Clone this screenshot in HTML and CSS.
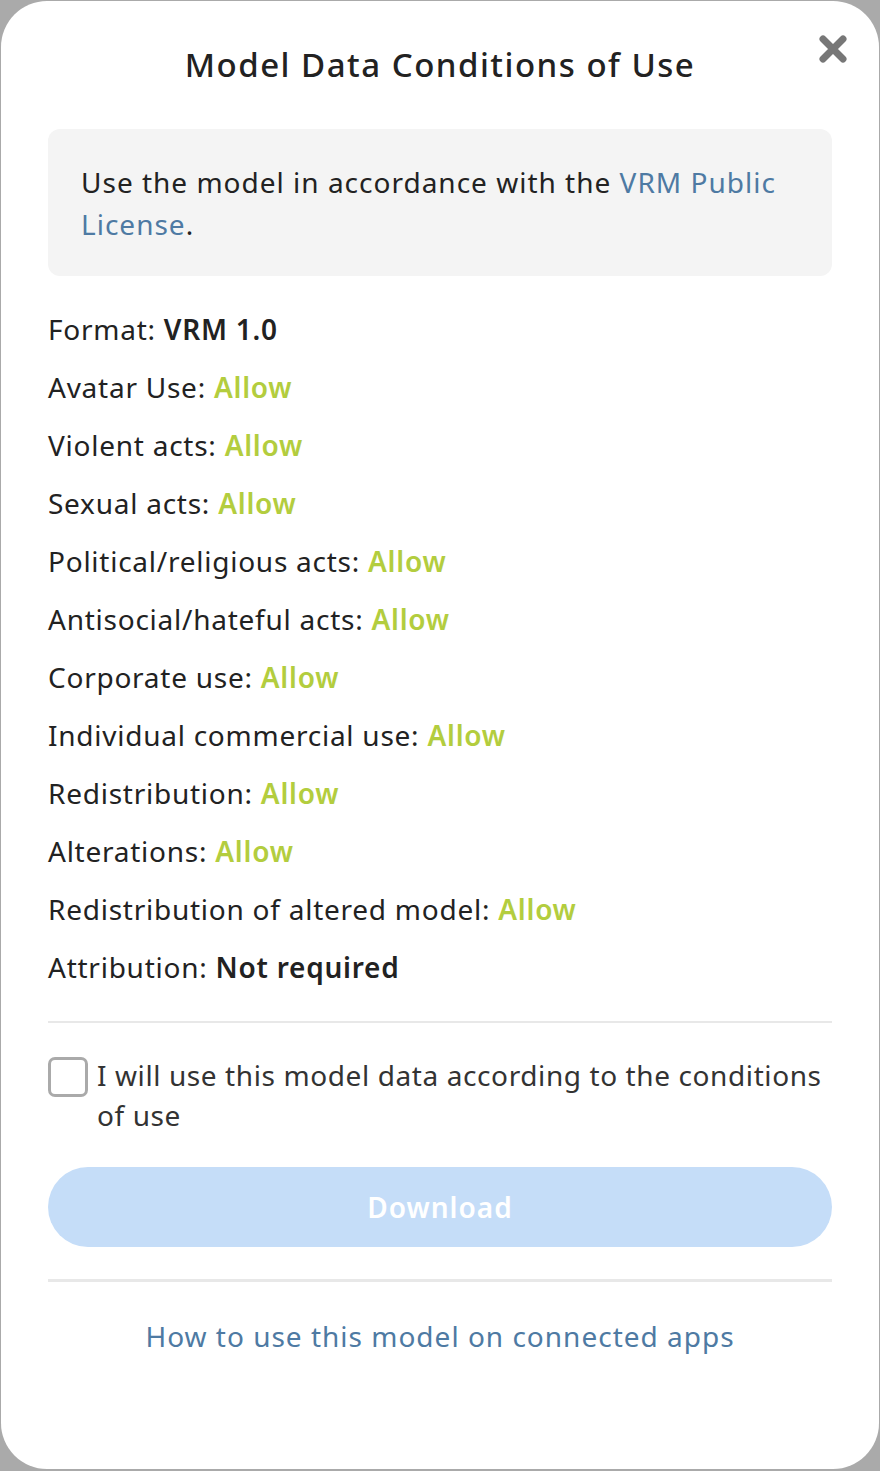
FILE: index.html
```html
<!DOCTYPE html>
<html lang="en">
<head>
  <meta charset="UTF-8">
  <meta name="viewport" content="width=device-width, initial-scale=1.0">
  <title>Model Data Conditions of Use</title>
  <link rel="stylesheet" href="styles.css">
</head>
<body>
    <div class="modal">
        <button class="close-button" aria-label="Close">
            <svg width="30" height="30" viewBox="0 0 30 30">
                <path d="M5 5 L25 25 M25 5 L5 25" stroke="#777777" stroke-width="7" stroke-linecap="round" fill="none"/>
            </svg>
        </button>
        <h1 class="modal-title">Model Data Conditions of Use</h1>

        <div class="license-box">
            Use the model in accordance with the <a href="#" class="link">VRM Public License</a>.
        </div>

        <ul class="conditions">
            <li>Format: <strong>VRM 1.0</strong></li>
            <li>Avatar Use: <span class="allow">Allow</span></li>
            <li>Violent acts: <span class="allow">Allow</span></li>
            <li>Sexual acts: <span class="allow">Allow</span></li>
            <li>Political/religious acts: <span class="allow">Allow</span></li>
            <li>Antisocial/hateful acts: <span class="allow">Allow</span></li>
            <li>Corporate use: <span class="allow">Allow</span></li>
            <li>Individual commercial use: <span class="allow">Allow</span></li>
            <li>Redistribution: <span class="allow">Allow</span></li>
            <li>Alterations: <span class="allow">Allow</span></li>
            <li>Redistribution of altered model: <span class="allow">Allow</span></li>
            <li>Attribution: <strong>Not required</strong></li>
        </ul>

        <hr class="divider">

        <label class="agree">
            <span class="checkbox"></span>
            <span class="agree-text">I will use this model data according to the conditions of use</span>
        </label>

        <button class="download-button" disabled>Download</button>

        <hr class="divider thick">

        <div class="footer">
            <a href="#" class="link">How to use this model on connected apps</a>
        </div>
    </div>
</body>
</html>
```

FILE: styles.css
```css
body {
    font-family: "Noto Sans", "Noto Sans CJK JP", sans-serif;
    letter-spacing: 1px;
    background-color: #aaaaaa;
    color: #222222;
    margin: 0;
    padding: 1px;
}
.modal {
    position: relative;
    width: 878px;
    height: 1468px;
    box-sizing: border-box;
    background-color: #ffffff;
    border-radius: 46px;
    padding: 0 47px;
}
.close-button {
    position: absolute;
    top: 33px;
    right: 31px;
    width: 30px;
    height: 30px;
    padding: 0;
    border: none;
    background: transparent;
    cursor: pointer;
}
.modal-title {
    margin: 0;
    padding-top: 42px;
    font-size: 33px;
    line-height: 44px;
    letter-spacing: 1.5px;
    font-weight: 500;
    text-align: center;
}
.license-box {
    margin-top: 42px;
    background-color: #f4f4f4;
    border-radius: 12px;
    padding: 32px 33px 31px;
    font-size: 28px;
    line-height: 42px;
}
.link {
    color: #4e7aa3;
    text-decoration: none;
}
.conditions {
    list-style: none;
    margin: 32px 0 0;
    padding: 0;
    display: flex;
    flex-direction: column;
    gap: 16px;
    font-size: 28px;
    line-height: 42px;
    letter-spacing: 0.75px;
}
.conditions strong {
    font-weight: 600;
}
.allow {
    color: #b3cd3e;
    font-weight: 600;
}
.divider {
    margin: 33px 0 0;
    border: none;
    border-top: 2px solid #e8e8e8;
}
.agree {
    display: flex;
    gap: 9px;
    margin-top: 32px;
    font-size: 28px;
    line-height: 40px;
    letter-spacing: 0.6px;
    color: #333333;
    cursor: pointer;
}
.checkbox {
    flex: none;
    width: 34px;
    height: 34px;
    margin-top: 2px;
    border: 3px solid #aaaaaa;
    border-radius: 7px;
}
.download-button {
    display: block;
    width: 100%;
    height: 80px;
    margin-top: 32px;
    border: none;
    border-radius: 40px;
    background-color: #c5ddf8;
    color: #ffffff;
    font-family: inherit;
    font-size: 28px;
    letter-spacing: 1px;
    font-weight: 600;
}
.divider.thick {
    margin-top: 32px;
    border-top-width: 3px;
}
.footer {
    margin-top: 33px;
    text-align: center;
    font-size: 28px;
    line-height: 42px;
}
```
